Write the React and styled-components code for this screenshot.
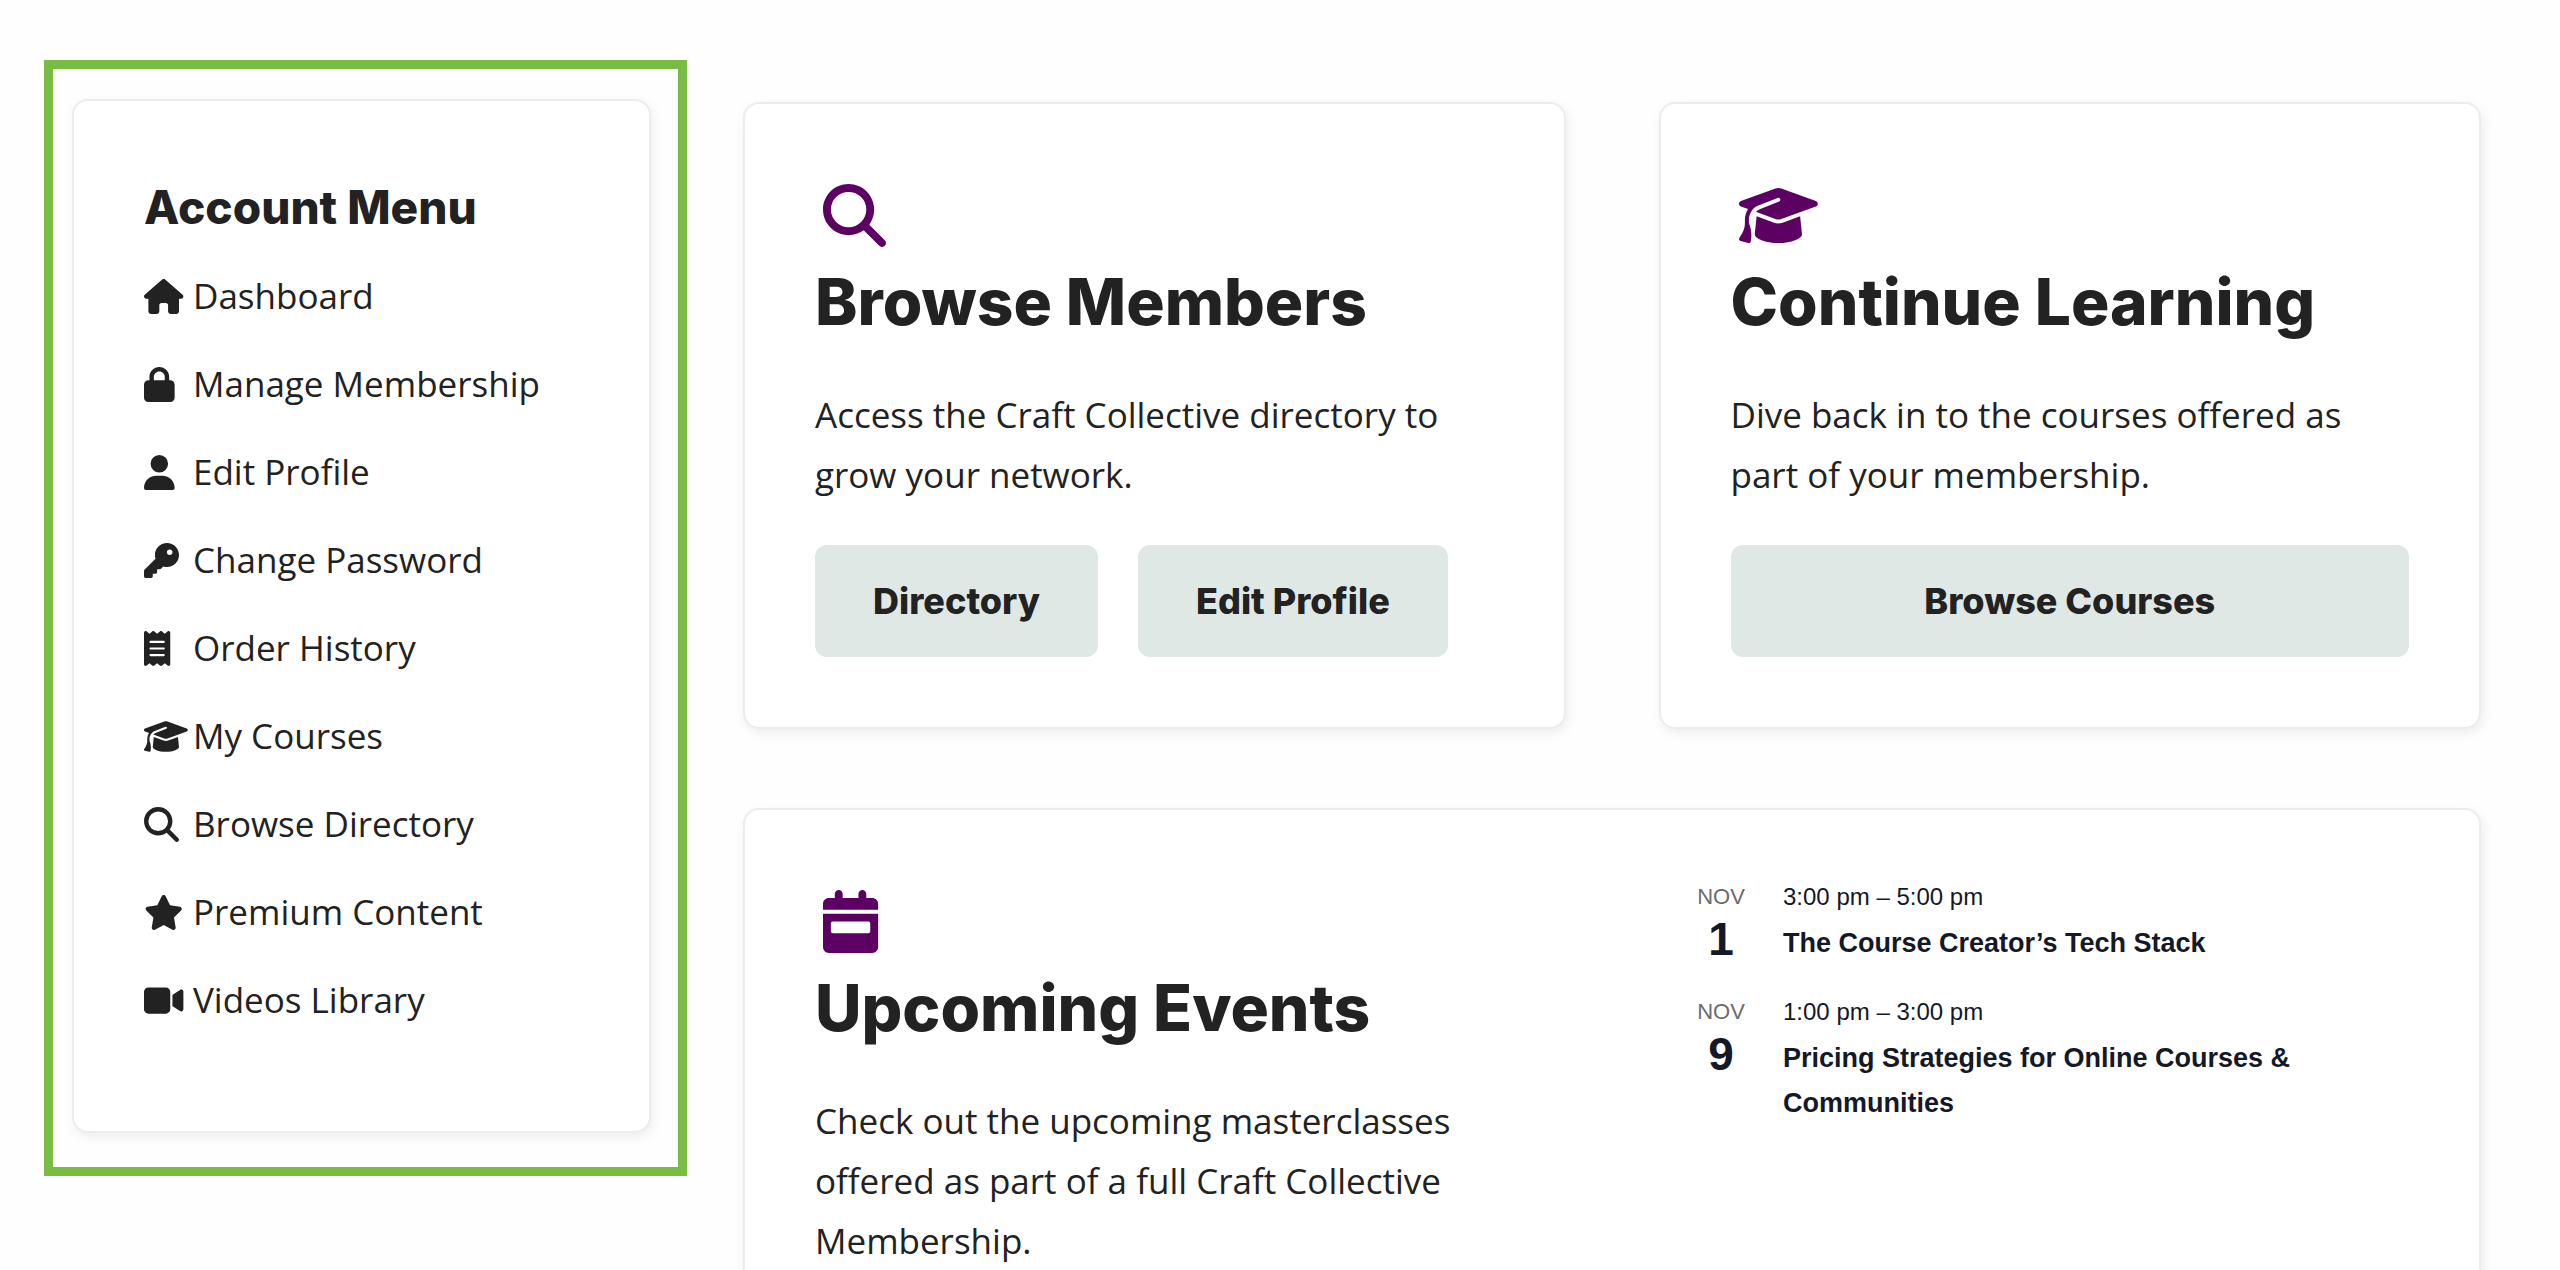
import React from 'react';
import styled, { createGlobalStyle } from 'styled-components';
import {
  FaHouse, FaLock, FaUser, FaKey, FaReceipt, FaGraduationCap,
  FaMagnifyingGlass, FaStar, FaVideo, FaCalendarWeek,
} from 'react-icons/fa6';

const ink = '#222222';
const plum = '#5c0063';
const heading = "Inter, 'Open Sans', sans-serif";
const body = "'Open Sans', 'Noto Sans', sans-serif";
const plain = "'Liberation Sans', Arial, sans-serif";

const GlobalStyle = createGlobalStyle`
  *, *::before, *::after { box-sizing: border-box; }
  body { margin: 0; background: #fefefe; color: ${ink}; font-family: ${body}; }
  h2, h3, p, ul { margin: 0; padding: 0; }
  ul { list-style: none; }
`;

const Page = styled.div`
  display: grid;
  grid-template-columns: minmax(0, 643fr) minmax(0, 1738fr);
  align-items: start;
  gap: 56px;
  height: 100vh;
  padding: 60px 79px 0 44px;
  overflow: hidden;
`;

const Sidebar = styled.aside`
  display: flex;
  flex-direction: column;
  gap: 95px;
`;

const Highlight = styled.div`
  padding: 30px 27px 34px 19px;
  border: 9px solid #79bc43;
`;

const Card = styled.section`
  padding: 72px 70px 70px;
  background: #ffffff;
  border: 2px solid #ebedec;
  border-radius: 16px;
  box-shadow: 2px 4px 12px rgba(0, 0, 0, 0.07);
`;

const MenuCard = styled(Card)`
  padding-bottom: 101px;
`;

const NextCard = styled(Card)`
  margin: 0 36px 0 28px;
`;

const MenuTitle = styled.h3`
  margin-bottom: 25px;
  font: 800 46px/68px ${heading};
`;

const MenuList = styled.ul`
  display: flex;
  flex-direction: column;
  gap: 28px;
`;

const MenuLink = styled.a`
  display: grid;
  grid-template-columns: 49px 1fr;
  align-items: center;
  color: inherit;
  font-size: 35px;
  line-height: 60px;
  text-decoration: none;
  white-space: nowrap;

  svg { display: block; height: 35px; width: 44px; }
`;

const Main = styled.main`
  display: grid;
  grid-template-columns: repeat(2, minmax(0, 1fr));
  gap: 79px 93px;
  padding-top: 42px;
`;

const WideCard = styled(Card)`
  grid-column: 1 / -1;
  display: grid;
  grid-template-columns: repeat(2, minmax(0, 1fr));
  gap: 160px;
`;

const CardIcon = styled.div`
  padding: 8px;
  color: ${plum};

  svg { display: block; height: 63px; width: 79px; }
`;

const CardTitle = styled.h2`
  margin-bottom: 36px;
  font: 800 64px/94px ${heading};
  white-space: nowrap;
`;

const CardText = styled.p`
  font-size: 35px;
  line-height: 60px;
`;

const Actions = styled.div`
  display: flex;
  gap: 40px;
  margin-top: 40px;
`;

const Button = styled.button`
  flex: ${(p) => (p.$wide ? '1' : 'none')};
  height: 112px;
  padding: 0 58px;
  border: 0;
  border-radius: 12px;
  background: #e0e8e5;
  color: ${ink};
  font: 800 36px/40px ${heading};
  white-space: nowrap;
  cursor: pointer;
`;

const EventList = styled.ul`
  display: flex;
  flex-direction: column;
  gap: 31px;
  color: #141827;
  font-family: ${plain};
`;

const Event = styled.li`
  display: grid;
  grid-template-columns: 58px 1fr;
  gap: 33px;
`;

const EventDate = styled.div`
  display: flex;
  flex-direction: column;
  align-items: center;
`;

const Month = styled.span`
  color: #6b6b70;
  font-size: 22px;
  line-height: 30px;
`;

const Day = styled.span`
  font-size: 46px;
  font-weight: 700;
  line-height: 54px;
`;

const Time = styled.p`
  font-size: 24px;
  line-height: 30px;
`;

const EventTitle = styled.h3`
  margin-top: 9px;
  font-size: 27px;
  line-height: 45px;
`;

const menu = [
  [FaHouse, 'Dashboard'],
  [FaLock, 'Manage Membership'],
  [FaUser, 'Edit Profile'],
  [FaKey, 'Change Password'],
  [FaReceipt, 'Order History'],
  [FaGraduationCap, 'My Courses'],
  [FaMagnifyingGlass, 'Browse Directory'],
  [FaStar, 'Premium Content'],
  [FaVideo, 'Videos Library'],
];

const events = [
  { month: 'NOV', day: '1', time: '3:00 pm – 5:00 pm', title: 'The Course Creator’s Tech Stack' },
  { month: 'NOV', day: '9', time: '1:00 pm – 3:00 pm', title: 'Pricing Strategies for Online Courses & Communities' },
];

function Intro({ icon: Icon, title, children }) {
  return (
    <div>
      <CardIcon><Icon aria-hidden="true" preserveAspectRatio="xMinYMid meet" /></CardIcon>
      <CardTitle>{title}</CardTitle>
      <CardText>{children}</CardText>
    </div>
  );
}

export default function App() {
  return (
    <>
      <GlobalStyle />
      <Page>
        <Sidebar>
          <Highlight>
            <MenuCard>
              <MenuTitle>Account Menu</MenuTitle>
              <nav>
                <MenuList>
                  {menu.map(([Icon, label]) => (
                    <li key={label}>
                      <MenuLink href="#">
                        <Icon aria-hidden="true" preserveAspectRatio="xMinYMid meet" />
                        <span>{label}</span>
                      </MenuLink>
                    </li>
                  ))}
                </MenuList>
              </nav>
            </MenuCard>
          </Highlight>
          <NextCard />
        </Sidebar>
        <Main>
          <Card>
            <Intro icon={FaMagnifyingGlass} title="Browse Members">
              Access the Craft Collective directory to grow your network.
            </Intro>
            <Actions>
              <Button>Directory</Button>
              <Button>Edit Profile</Button>
            </Actions>
          </Card>
          <Card>
            <Intro icon={FaGraduationCap} title="Continue Learning">
              Dive back in to the courses offered as part of your membership.
            </Intro>
            <Actions>
              <Button $wide>Browse Courses</Button>
            </Actions>
          </Card>
          <WideCard>
            <Intro icon={FaCalendarWeek} title="Upcoming Events">
              Check out the upcoming masterclasses offered as part of a full Craft Collective Membership.
            </Intro>
            <EventList>
              {events.map((e) => (
                <Event key={e.title}>
                  <EventDate>
                    <Month>{e.month}</Month>
                    <Day>{e.day}</Day>
                  </EventDate>
                  <div>
                    <Time>{e.time}</Time>
                    <EventTitle>{e.title}</EventTitle>
                  </div>
                </Event>
              ))}
            </EventList>
          </WideCard>
        </Main>
      </Page>
    </>
  );
}
